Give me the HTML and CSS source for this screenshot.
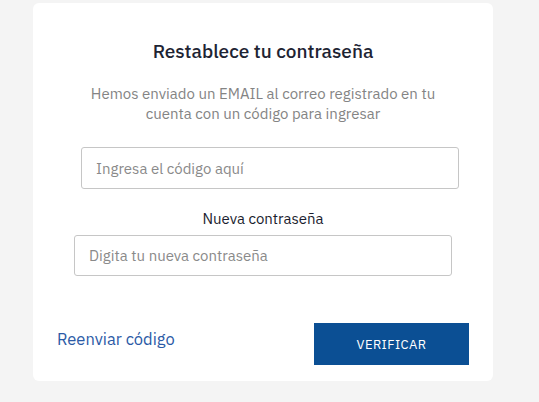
FILE: index.html
```html
<!DOCTYPE html>
<html lang="es">

<head>
    <meta charset="UTF-8">
    <meta name="viewport" content="width=device-width, initial-scale=1.0">
    <title>Restablece tu contraseña</title>
    <link rel="stylesheet" href="styles.css">
</head>

<body>
    <div class="card">
        <h2 class="card-title">Restablece tu contraseña</h2>
        <p class="card-text">Hemos enviado un EMAIL al correo registrado en tu cuenta con un código para ingresar</p>

        <input type="text" class="field field-code" placeholder="Ingresa el código aquí">

        <label class="field-label" for="new-pass">Nueva contraseña</label>
        <input type="password" id="new-pass" class="field field-pass" placeholder="Digita tu nueva contraseña">

        <div class="card-actions">
            <a href="#" class="resend">Reenviar código</a>
            <button class="btn-verify">VERIFICAR</button>
        </div>
    </div>
</body>

</html>
```

FILE: styles.css
```css
/* base */
body {
    margin: 0;
    background: #f4f4f4;
    font-family: "IBM Plex Sans", Roboto, "Liberation Sans", sans-serif;
    padding: 3px 0 0 33px;
}

.card {
    width: 460px;
    height: 378px;
    box-sizing: border-box;
    background: #fff;
    border-radius: 6px;
    padding: 36px 24px 0;
    display: flex;
    flex-direction: column;
}

.card-title {
    margin: 0;
    text-align: center;
    font-size: 19px;
    font-weight: 500;
    color: #1e2433;
    line-height: 24px;
}

.card-text {
    margin: 21px 20px 0;
    text-align: center;
    font-size: 15px;
    line-height: 20px;
    color: #848484;
}

/* inputs */
.field {
    box-sizing: border-box;
    width: 378px;
    border: 1px solid #c6c6c6;
    border-radius: 3px;
    font-family: inherit;
    font-size: 15px;
    padding: 0 14px;
    color: #333;
    outline: none;
}

.field::placeholder {
    color: #8a8a8a;
}

.field-code {
    height: 42px;
    margin: 23px 0 0 24px;
}

.field-pass {
    height: 41px;
    margin: 6px 0 0 17px;
}

.field-label {
    margin-top: 20px;
    text-align: center;
    font-size: 15px;
    line-height: 20px;
    color: #1a1d2e;
}

/* acciones */
.card-actions {
    display: flex;
    justify-content: space-between;
    align-items: center;
    margin-top: 47px;
}

.resend {
    color: #2b5aa6;
    text-decoration: none;
    font-size: 16.5px;
    margin-top: -10px;
}

.btn-verify {
    width: 155px;
    height: 42px;
    border: none;
    background: #0b4f94;
    color: #fff;
    font-family: inherit;
    font-size: 13px;
    letter-spacing: 0.4px;
    cursor: pointer;
}
```
